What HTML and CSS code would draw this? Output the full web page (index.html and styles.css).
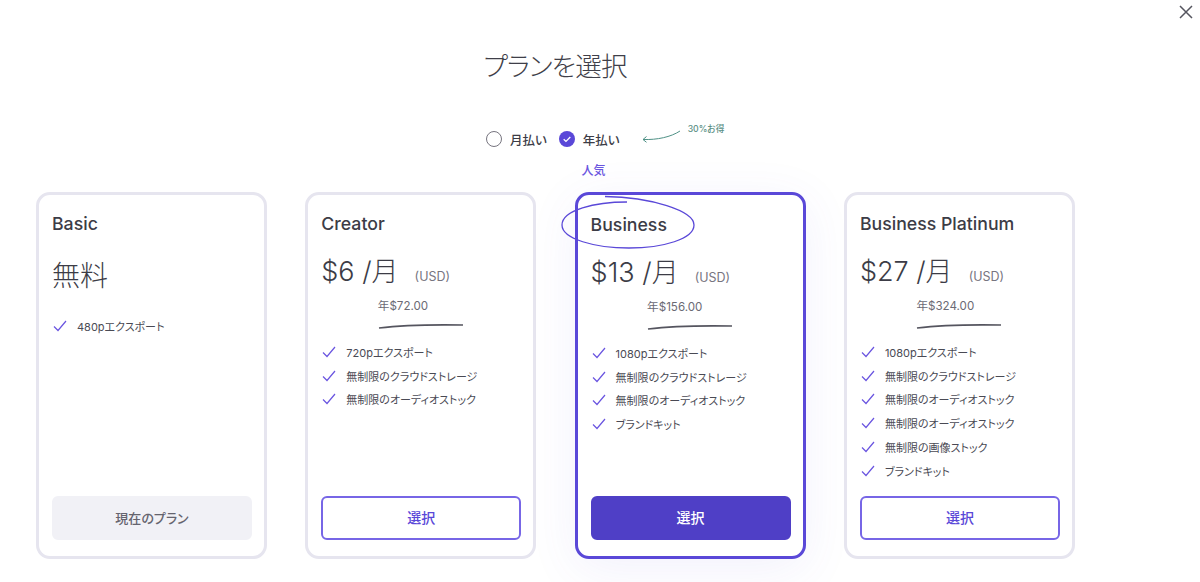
FILE: index.html
```html
<!DOCTYPE html>
<html lang="ja">
<head>
<meta charset="utf-8">
<title>プランを選択</title>
<link rel="stylesheet" href="styles.css">
</head>
<body>
<button class="close" aria-label="閉じる">
  <svg width="14" height="14" viewBox="0 0 14 14"><path d="M1 1l12 12M13 1L1 13" stroke="#55555f" stroke-width="1.5" fill="none"/></svg>
</button>
<main class="page">
  <h1 class="title">プランを選択</h1>
  <div class="toggle">
    <span class="radio"></span><span class="toggle-label">月払い</span>
    <span class="radio-on">
      <svg width="16" height="16" viewBox="0 0 17 17"><circle cx="8.5" cy="8.5" r="8.5" fill="#5a48d8"/><path d="M5 8.8l2.4 2.3L12 6.4" stroke="#fff" stroke-width="1.4" fill="none"/></svg>
    </span><span class="toggle-label">年払い</span>
    <span class="save">
      <svg class="save-arrow" width="42" height="14" viewBox="0 0 42 14"><path d="M39 1C30 7 16 10 2 9.5M5.500 6.500L2 9.500l3.500 2.800" stroke="#4f9186" stroke-width="1" fill="none"/></svg>
      <span class="save-text">30%お得</span>
    </span>
  </div>
  <div class="cards">
    <section class="card card-basic">
      <h2 class="name">Basic</h2>
      <div class="free">無料</div>
      <ul class="features">
        <li><svg class="tick" viewBox="0 0 14 12"><path d="M1 6.500L5 10.500 13 1" /></svg>480pエクスポート</li>
      </ul>
      <button class="btn btn-current">現在のプラン</button>
    </section>
    <section class="card">
      <h2 class="name">Creator</h2>
      <div class="price"><span class="amount">$6 /月</span><span class="usd">(USD)</span></div>
      <div class="annual">年$72.00</div>
      <svg class="stroke" viewBox="0 0 86 6"><path d="M1 5C25 2 55 1.500 85 2"/></svg>
      <ul class="features">
        <li><svg class="tick" viewBox="0 0 14 12"><path d="M1 6.500L5 10.500 13 1" /></svg>720pエクスポート</li>
        <li><svg class="tick" viewBox="0 0 14 12"><path d="M1 6.500L5 10.500 13 1" /></svg>無制限のクラウドストレージ</li>
        <li><svg class="tick" viewBox="0 0 14 12"><path d="M1 6.500L5 10.500 13 1" /></svg>無制限のオーディオストック</li>
      </ul>
      <button class="btn btn-outline">選択</button>
    </section>
    <section class="card card-featured">
      <span class="popular">人気</span>
      <svg class="ellipse" width="134" height="53" viewBox="0 0 134 53"><path d="M66 6C34 6 1 14 1 29 1 43 34 52 68 52c34 0 65-9 65-23C133 15 90 1 44 0.500" /></svg>
      <h2 class="name">Business</h2>
      <div class="price"><span class="amount">$13 /月</span><span class="usd">(USD)</span></div>
      <div class="annual">年$156.00</div>
      <svg class="stroke" viewBox="0 0 86 6"><path d="M1 5C25 2 55 1.500 85 2"/></svg>
      <ul class="features">
        <li><svg class="tick" viewBox="0 0 14 12"><path d="M1 6.500L5 10.500 13 1" /></svg>1080pエクスポート</li>
        <li><svg class="tick" viewBox="0 0 14 12"><path d="M1 6.500L5 10.500 13 1" /></svg>無制限のクラウドストレージ</li>
        <li><svg class="tick" viewBox="0 0 14 12"><path d="M1 6.500L5 10.500 13 1" /></svg>無制限のオーディオストック</li>
        <li><svg class="tick" viewBox="0 0 14 12"><path d="M1 6.500L5 10.500 13 1" /></svg>ブランドキット</li>
      </ul>
      <button class="btn btn-solid">選択</button>
    </section>
    <section class="card">
      <h2 class="name">Business Platinum</h2>
      <div class="price"><span class="amount">$27 /月</span><span class="usd">(USD)</span></div>
      <div class="annual">年$324.00</div>
      <svg class="stroke" viewBox="0 0 86 6"><path d="M1 5C25 2 55 1.500 85 2"/></svg>
      <ul class="features">
        <li><svg class="tick" viewBox="0 0 14 12"><path d="M1 6.500L5 10.500 13 1" /></svg>1080pエクスポート</li>
        <li><svg class="tick" viewBox="0 0 14 12"><path d="M1 6.500L5 10.500 13 1" /></svg>無制限のクラウドストレージ</li>
        <li><svg class="tick" viewBox="0 0 14 12"><path d="M1 6.500L5 10.500 13 1" /></svg>無制限のオーディオストック</li>
        <li><svg class="tick" viewBox="0 0 14 12"><path d="M1 6.500L5 10.500 13 1" /></svg>無制限のオーディオストック</li>
        <li><svg class="tick" viewBox="0 0 14 12"><path d="M1 6.500L5 10.500 13 1" /></svg>無制限の画像ストック</li>
        <li><svg class="tick" viewBox="0 0 14 12"><path d="M1 6.500L5 10.500 13 1" /></svg>ブランドキット</li>
      </ul>
      <button class="btn btn-outline">選択</button>
    </section>
  </div>
</main>
</body>
</html>
```
FILE: styles.css
```css
* { box-sizing: border-box; }
html, body { height: 100%; }
body {
  margin: 0;
  background: #fff;
  color: #3c3c46;
  font-family: Inter, "Noto Sans CJK JP", sans-serif;
  font-feature-settings: "palt";
  overflow: hidden;
}
.close {
  position: absolute;
  top: 5px;
  right: 7px;
  padding: 0;
  border: 0;
  background: none;
  line-height: 0;
}
.page { padding: 46px 0 0 36px; }
.title {
  margin: 0;
  width: 1038px;
  font-size: 26.500px;
  letter-spacing: -0.800px;
  line-height: 40px;
  font-weight: 300;
  text-align: center;
  color: #3f3f49;
}
.toggle {
  display: flex;
  align-items: center;
  height: 20px;
  margin: 43px 0 0 450px;
  font-size: 12.500px;
  font-weight: 500;
}
.radio {
  width: 16px;
  height: 16px;
  border: 1.500px solid #77757f;
  border-radius: 50%;
}
.radio-on { margin-left: 12px; line-height: 0; }
.toggle-label { margin-left: 8px; color: #3c3c46; }
.save { position: relative; margin-left: 21px; width: 80px; height: 20px; }
.save-arrow { position: absolute; left: 0; top: 1px; }
.save-text {
  position: absolute;
  left: 47px;
  top: -7px;
  font-size: 8.700px;
  color: #5a8f85;
  white-space: nowrap;
}
.cards {
  display: flex;
  gap: 38.300px;
  margin-top: 43px;
}
.card {
  position: relative;
  display: flex;
  flex-direction: column;
  width: 231px;
  height: 367px;
  padding: 17px 13px 16px;
  border: 3px solid #e6e5ef;
  border-radius: 14px;
  background: #fff;
}
.card-featured {
  padding-top: 18px;
  border-color: #5a48d8;
  box-shadow: 0 10px 50px rgba(90, 72, 216, 0.08);
}
.popular {
  position: absolute;
  left: 4px;
  top: -34px;
  font-size: 12px;
  font-weight: 500;
  color: #6a55e0;
}
.ellipse {
  position: absolute;
  left: -17px;
  top: 1px;
  overflow: visible;
}
.ellipse path { fill: none; stroke: #5a48d8; stroke-width: 1.300; }
.name {
  margin: 0;
  font-size: 17.700px;
  line-height: 24px;
  font-weight: 500;
  color: #3c3c46;
}
.free {
  margin-top: 21px;
  font-size: 28px;
  line-height: 38px;
  font-weight: 300;
}
.card-basic .features { margin-top: 19px; }
.price {
  display: flex;
  align-items: baseline;
  margin-top: 17px;
  line-height: 38px;
}
.amount { font-size: 27px; font-weight: 300; }
.usd { margin-left: 16px; font-size: 12.500px; color: #77757f; }
.annual {
  width: 86px;
  margin: 0 auto;
  font-size: 11.600px;
  line-height: 20px;
  color: #6b6a74;
  white-space: nowrap;
}
.stroke {
  display: block;
  width: 86px;
  height: 6px;
  margin: 7px auto 0;
}
.stroke path { fill: none; stroke: #55555f; stroke-width: 1.600; }
.features {
  margin: 11px 0 0;
  padding: 0;
  list-style: none;
  font-size: 11px;
  color: #4a4a54;
}
.features li {
  display: flex;
  align-items: center;
  height: 23.800px;
  white-space: nowrap;
}
.tick {
  width: 14px;
  height: 12px;
  margin-left: 1px;
  margin-right: 10px;
  flex: none;
}
.tick path { fill: none; stroke: #6a55e0; stroke-width: 1.200; }
.btn {
  margin-top: auto;
  width: 200px;
  height: 44px;
  flex: none;
  padding: 0 0 2px;
  border-radius: 6px;
  font: inherit;
  font-size: 14px;
  font-weight: 500;
  background: #fff;
  border: 2px solid #7766e6;
  color: #5a48d8;
}
.btn-current {
  font-size: 13px;
  background: #f1f1f6;
  border-color: #f1f1f6;
  color: #65646e;
}
.btn-solid {
  background: #4f3fc6;
  border-color: #4f3fc6;
  color: #fff;
}
```
